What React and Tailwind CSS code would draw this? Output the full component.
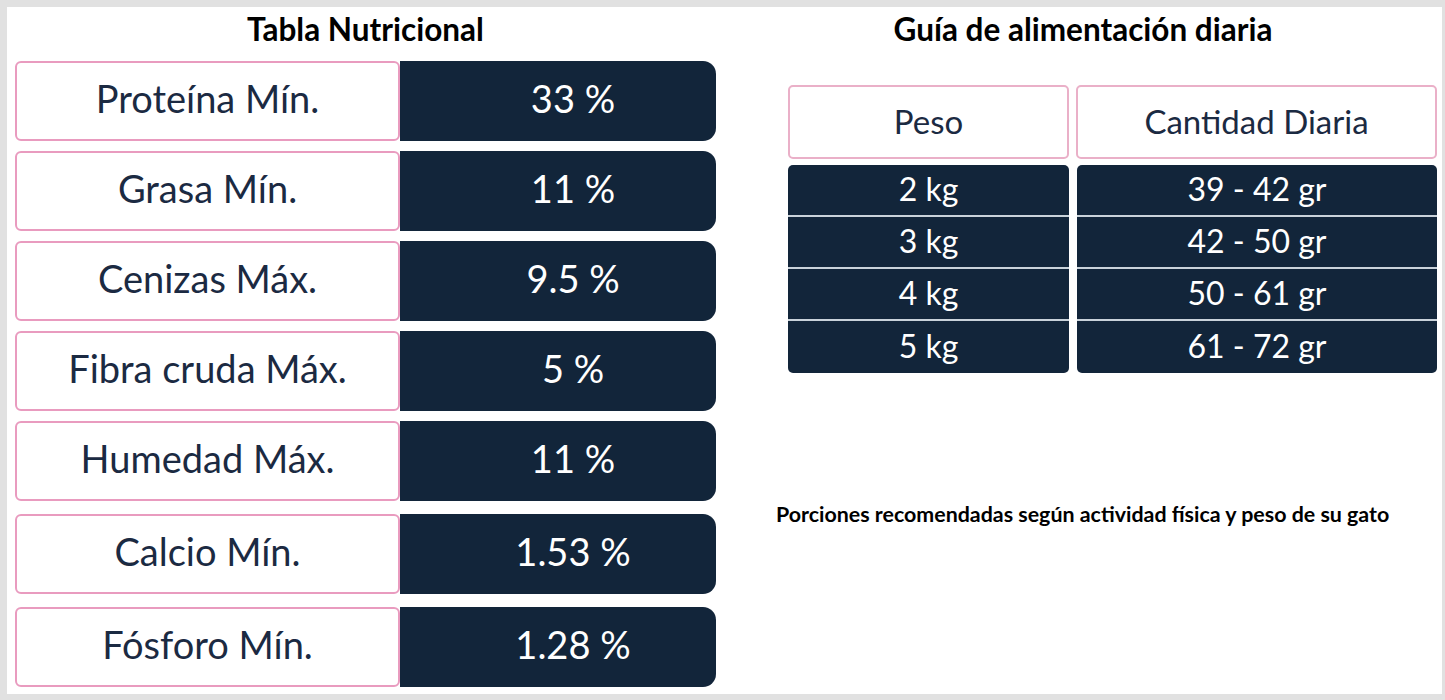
const nutrients = [
  { label: 'Proteína Mín.', value: '33 %', extra: '' },
  { label: 'Grasa Mín.', value: '11 %', extra: 'mt-[10px]' },
  { label: 'Cenizas Máx.', value: '9.5 %', extra: 'mt-[10px]' },
  { label: 'Fibra cruda Máx.', value: '5 %', extra: 'mt-[10px]' },
  { label: 'Humedad Máx.', value: '11 %', extra: 'mt-[10px]' },
  { label: 'Calcio Mín.', value: '1.53 %', extra: 'mt-[13px]' },
  { label: 'Fósforo Mín.', value: '1.28 %', extra: 'mt-[13px]' },
];

const pesos = ['2 kg', '3 kg', '4 kg', '5 kg'];
const cantidades = ['39 - 42 gr', '42 - 50 gr', '50 - 61 gr', '61 - 72 gr'];

const body = { fontFamily: 'Lato, "Open Sans", sans-serif' };

const GuideColumn = ({ items, width }) => (
  <div className={`${width} h-[208px] bg-[#12253a] rounded-[5px] flex flex-col overflow-hidden`}>
    {items.map((item, i) => (
      <div
        key={item}
        className={`h-[52px] flex items-center justify-center pb-[2px] text-white text-[32px] ${i < items.length - 1 ? 'border-b-2 border-[#c9d2da]' : ''}`}
        style={body}
      >
        {item}
      </div>
    ))}
  </div>
);

export default function App() {
  return (
    <div className="h-[700px] bg-[#e1e1e1] pt-[7px] pl-[7px] pr-[3px] pb-[6px]">
      <div className="h-full bg-white flex">
        {/* Tabla nutricional */}
        <div className="w-[701px] ml-[8px] flex flex-col">
          <h1
            className="h-[54px] pt-[3px] text-center text-[31.5px] font-bold text-black leading-[38px]"
            style={body}
          >
            Tabla Nutricional
          </h1>
          {nutrients.map((n) => (
            <div key={n.label} className={`flex h-[80px] ${n.extra}`}>
              <div className="w-[385px] h-full border-2 border-[#e99bbf] rounded-[6px] bg-white flex items-center justify-center pb-[6px] text-[#1b2a42] text-[38px]" style={body}>
                {n.label}
              </div>
              <div className="flex-1 h-full bg-[#12253a] rounded-r-[13px] flex items-center justify-center pl-[30px] pb-[6px] text-white text-[38px]" style={body}>
                {n.value}
              </div>
            </div>
          ))}
        </div>

        {/* Guía de alimentación */}
        <div className="ml-[60px] flex flex-col">
          <h2
            className="w-[614px] h-[54px] pt-[3px] text-center text-[31.5px] font-bold text-black leading-[38px]"
            style={body}
          >
            Guía de alimentación diaria
          </h2>
          <div className="ml-[12px] mt-[24px] flex gap-[7px]">
            <div className="w-[281px] h-[74px] border-2 border-[#eab0c8] rounded-[5px] flex items-center justify-center text-[#1b2a42] text-[33px]" style={body}>
              Peso
            </div>
            <div className="w-[361px] h-[74px] border-2 border-[#eab0c8] rounded-[5px] flex items-center justify-center text-[#1b2a42] text-[33px]" style={body}>
              Cantidad Diaria
            </div>
          </div>
          <div className="ml-[12px] mt-[6px] flex gap-[8px]">
            <GuideColumn items={pesos} width="w-[281px]" />
            <GuideColumn items={cantidades} width="w-[360px]" />
          </div>
          <p className="mt-[127px] text-[21.4px] leading-[28px] font-bold text-black" style={body}>
            Porciones recomendadas según actividad física y peso de su gato
          </p>
        </div>
      </div>
    </div>
  );
}
